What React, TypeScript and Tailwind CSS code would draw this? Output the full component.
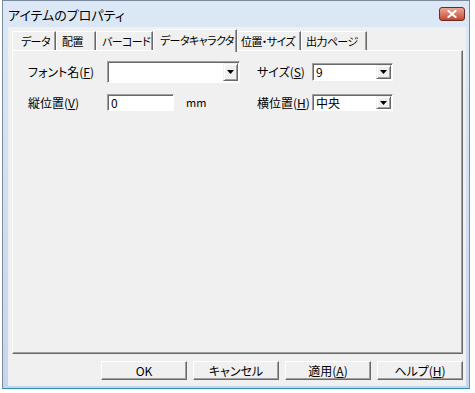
import React from 'react'

const jp = "font-['Noto_Sans_CJK_JP','Liberation_Sans',sans-serif] [font-feature-settings:'palt']"

function Key({ c }: { c: string }) {
  return <span className="underline underline-offset-[1px]">{c}</span>
}

function DropBtn() {
  return (
    <div className="w-[15px] m-[1px] flex items-center justify-center bg-[#f0f0f0] border border-t-[#f0f0f0] border-l-[#f0f0f0] border-b-[#696969] border-r-[#696969] shadow-[inset_1px_1px_0_#fff,inset_-1px_-1px_0_#a0a0a0]">
      <svg width="7" height="4" viewBox="0 0 7 4">
        <polygon points="0,0 7,0 3.5,4" fill="#000" />
      </svg>
    </div>
  )
}

function Combo({ className, value }: { className: string; value?: string }) {
  return (
    <div
      className={`flex bg-white border border-t-[#a0a0a0] border-l-[#a0a0a0] border-b-white border-r-white shadow-[inset_1px_1px_0_#696969] ${className}`}
    >
      <div className="flex-1 flex items-center pl-[3px] text-[12px] leading-none">{value}</div>
      <DropBtn />
    </div>
  )
}

function Button({ children }: { children: React.ReactNode }) {
  return (
    <button className="w-[86px] h-[19px] flex items-center justify-center text-[12px] leading-none bg-[#f0f0f0] border border-t-white border-l-white border-b-[#696969] border-r-[#696969] shadow-[inset_-1px_-1px_0_#a0a0a0]">
      {children}
    </button>
  )
}

const tabs = [
  { label: 'データ', w: 'w-[44px] pl-[8px]' },
  { label: '配置', w: 'w-[40px] pl-[5px]' },
  { label: 'バーコード', w: 'w-[57px] pl-[5px]' },
  { label: 'データキャラクタ', w: 'w-[84px] pl-[6px]', active: true },
  { label: '位置・サイズ', w: 'w-[64px] pl-[3px]' },
  { label: '出力ページ', w: 'w-[66px] pl-[4px]' },
]

export default function App() {
  return (
    <div className={`w-[475px] h-[393px] bg-white text-black ${jp}`}>
      <div className="ml-[2px] w-[468px] h-[389px] border border-[#7b8b9b] border-b-[#2f8fb0] bg-gradient-to-b from-[#dce8f6] to-[#c4d7ee] flex flex-col pl-[5px] pr-[3px] pb-[2px]">
        {/* title bar */}
        <div className="h-[26px] flex justify-between">
          <div className="flex items-center text-[13px] leading-none">アイテムのプロパティ</div>
          <div className="mt-[6px] mr-[1px] w-[26px] h-[14px] rounded-[3px] border border-[#6d2a20] bg-gradient-to-b from-[#e9a897] to-[#c2452f] flex items-center justify-center">
            <svg width="10" height="8" viewBox="0 0 10 8">
              <path d="M1.5 1 L8.5 7 M8.5 1 L1.5 7" stroke="#fff" strokeWidth="2" strokeLinecap="square" />
            </svg>
          </div>
        </div>

        {/* client */}
        <div className="flex-1 bg-[#f0f0f0] flex flex-col">
          <div className="relative z-10 mt-[2px] -mb-[2px] ml-[4px] h-[23px] flex items-end">
            {tabs.map((t) =>
              t.active ? (
                <div
                  key={t.label}
                  className={`${t.w} h-[23px] flex items-center whitespace-nowrap overflow-hidden text-[11px] tracking-[-0.6px] leading-none bg-[#f0f0f0] border-t border-l border-t-white border-l-white border-r border-r-[#696969] shadow-[inset_-1px_0_0_#a0a0a0] pb-[2px]`}
                >
                  {t.label}
                </div>
              ) : (
                <div
                  key={t.label}
                  className={`${t.w} h-[19px] mb-[2px] flex items-center whitespace-nowrap overflow-hidden text-[11px] tracking-[-0.6px] leading-none border-t border-l border-t-white border-l-white border-r border-r-[#696969] shadow-[inset_-1px_0_0_#a0a0a0]`}
                >
                  {t.label}
                </div>
              )
            )}
          </div>

          {/* tab panel */}
          <div className="ml-[4px] mr-[3px] h-[304px] border border-t-white border-l-white border-b-[#696969] border-r-[#696969] shadow-[inset_-1px_-1px_0_#a0a0a0] pt-[10px] pl-[15px] text-[12px] leading-none">
            <div className="h-[22px] flex items-center">
              <div className="w-[79px]">
                フォント名(<Key c="F" />)
              </div>
              <Combo className="w-[133px] h-[22px]" />
              <div className="w-[17px]" />
              <div className="w-[55px]">
                サイズ(<Key c="S" />)
              </div>
              <Combo className="w-[81px] h-[18px]" value="9" />
            </div>
            <div className="mt-[11px] h-[17px] flex items-center">
              <div className="w-[79px]">
                縦位置(<Key c="V" />)
              </div>
              <div className="w-[67px] h-[17px] flex items-center pl-[3px] bg-white border border-t-[#a0a0a0] border-l-[#a0a0a0] border-b-white border-r-white shadow-[inset_1px_1px_0_#696969]">
                0
              </div>
              <div className="w-[83px] pl-[12px] text-[11px]">mm</div>
              <div className="w-[55px]">
                横位置(<Key c="H" />)
              </div>
              <Combo className="w-[81px] h-[17px]" value="中央" />
            </div>
          </div>

          {/* buttons */}
          <div className="mt-[7px] pr-[3px] flex justify-end gap-[6px]">
            <Button>OK</Button>
            <Button>キャンセル</Button>
            <Button>
              適用(<Key c="A" />)
            </Button>
            <Button>
              ヘルプ(<Key c="H" />)
            </Button>
          </div>
        </div>
      </div>
    </div>
  )
}
